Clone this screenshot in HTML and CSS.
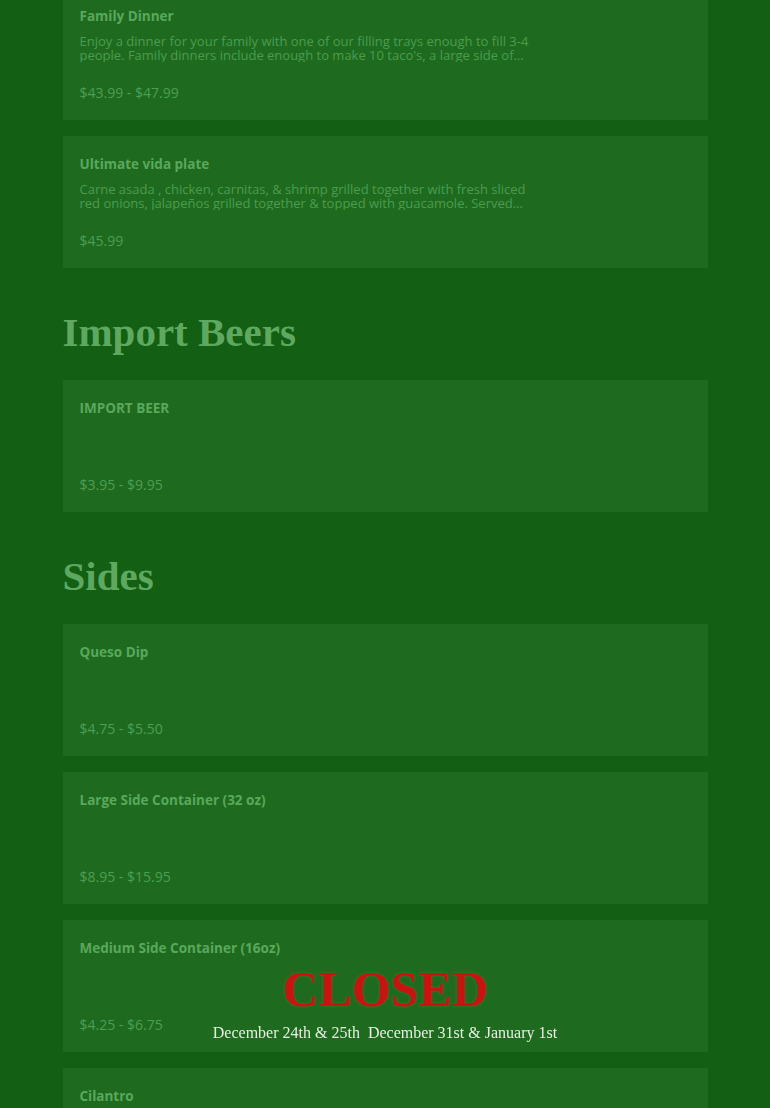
FILE: index.html
```html
<!DOCTYPE html>
<html lang="en">
<head>
<meta charset="utf-8">
<title>Menu</title>
<link rel="stylesheet" href="styles.css">
</head>
<body>
<main class="menu">
  <section class="section section-first">
    <div class="cards">
      <article class="card">
        <h3 class="item-title">Family Dinner</h3>
        <p class="item-desc">Enjoy a dinner for your family with one of our filling trays enough to fill 3-4 people. Family dinners include enough to make 10 taco's, a large side of rice, a large side of beans, and chips with salsa.</p>
        <p class="item-price">$43.99 - $47.99</p>
      </article>
      <article class="card">
        <h3 class="item-title">Ultimate vida plate</h3>
        <p class="item-desc">Carne asada , chicken, carnitas, &amp; shrimp grilled together with fresh sliced red onions, jalapeños grilled together &amp; topped with guacamole. Served with rice, beans and tortillas.</p>
        <p class="item-price">$45.99</p>
      </article>
    </div>
  </section>

  <section class="section">
    <h2 class="section-title">Import Beers</h2>
    <div class="cards">
      <article class="card">
        <h3 class="item-title">IMPORT BEER</h3>
        <p class="item-desc"></p>
        <p class="item-price">$3.95 - $9.95</p>
      </article>
    </div>
  </section>

  <section class="section">
    <h2 class="section-title">Sides</h2>
    <div class="cards">
      <article class="card">
        <h3 class="item-title">Queso Dip</h3>
        <p class="item-desc"></p>
        <p class="item-price">$4.75 - $5.50</p>
      </article>
      <article class="card">
        <h3 class="item-title">Large Side Container (32 oz)</h3>
        <p class="item-desc"></p>
        <p class="item-price">$8.95 - $15.95</p>
      </article>
      <article class="card">
        <h3 class="item-title">Medium Side Container (16oz)</h3>
        <p class="item-desc"></p>
        <p class="item-price">$4.25 - $6.75</p>
      </article>
      <article class="card">
        <h3 class="item-title">Cilantro</h3>
        <p class="item-desc"></p>
        <p class="item-price">$0.50</p>
      </article>
    </div>
  </section>
</main>

<div class="notice">
  <div class="notice-closed">CLOSED</div>
  <div class="notice-dates">December 24th &amp; 25th&nbsp; December 31st &amp; January 1st</div>
</div>
</body>
</html>
```

FILE: styles.css
```css
html, body {
  margin: 0;
  padding: 0;
}

body {
  background: #135f14;
  font-family: "Open Sans", Lato, sans-serif;
  overflow: hidden;
}

.menu {
  width: 645px;
  margin: -12px auto 0;
}

.section {
  display: flex;
  flex-direction: column;
}

.section-title {
  margin: 34px 0 18px;
  font-family: "Liberation Serif", serif;
  font-weight: bold;
  font-size: 41px;
  line-height: 60px;
  color: #5ea95f;
}

.cards {
  display: flex;
  flex-direction: column;
  gap: 16px;
}

.card {
  background: #1e6b1f;
  padding: 20px 17px 19px;
}

.item-title {
  margin: 0;
  font-size: 13.5px;
  line-height: 16px;
  font-weight: bold;
  color: #5aa85c;
}

.item-desc {
  margin: 10px 0 0;
  max-width: 462px;
  height: 28px;
  font-size: 13px;
  line-height: 14px;
  color: #4c9b4e;
  display: -webkit-box;
  -webkit-line-clamp: 2;
  -webkit-box-orient: vertical;
  overflow: hidden;
}

.item-price {
  margin: 23px 0 0;
  font-size: 14px;
  line-height: 16px;
  color: #4e9d50;
}

.notice {
  position: fixed;
  left: 0;
  right: 0;
  bottom: 65px;
  text-align: center;
  font-family: "Liberation Serif", serif;
}

.notice-closed {
  font-size: 50px;
  line-height: 50px;
  font-weight: bold;
  color: #cc1111;
  margin-bottom: 9px;
  text-shadow: 0 0 3px #3f7f2c;
}

.notice-dates {
  font-size: 16px;
  line-height: 20px;
  color: #e6f0e2;
}
```
